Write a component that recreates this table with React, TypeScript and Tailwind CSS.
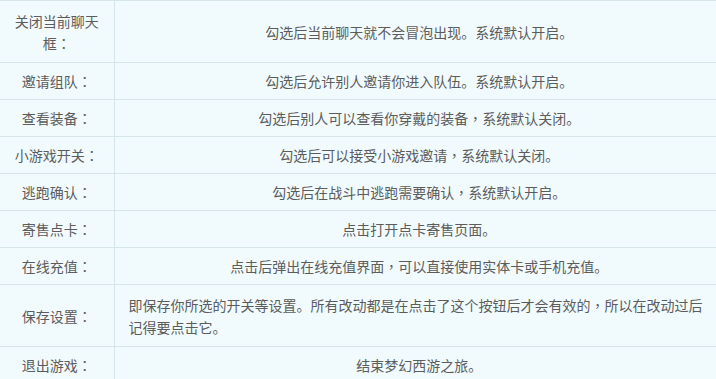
import React from 'react'

// full-width comma/colon sit in the middle of their cell in the original font
const P = ({ c }: { c: string }) => (
  <span style={{ fontFamily: '"Noto Sans CJK TC", sans-serif' }}>{c}</span>
)

function fmt(s: string) {
  return s.split(/([，：])/).map((part, i) =>
    part === '，' || part === '：' ? <P key={i} c={part} /> : <React.Fragment key={i}>{part}</React.Fragment>
  )
}

type Row = { name: string; desc: string; tall?: boolean; left?: boolean }

const rows: Row[] = [
  { name: '关闭当前聊天\n框：', desc: '勾选后当前聊天就不会冒泡出现。系统默认开启。', tall: true },
  { name: '邀请组队：', desc: '勾选后允许别人邀请你进入队伍。系统默认开启。' },
  { name: '查看装备：', desc: '勾选后别人可以查看你穿戴的装备，系统默认关闭。' },
  { name: '小游戏开关：', desc: '勾选后可以接受小游戏邀请，系统默认关闭。' },
  { name: '逃跑确认：', desc: '勾选后在战斗中逃跑需要确认，系统默认开启。' },
  { name: '寄售点卡：', desc: '点击打开点卡寄售页面。' },
  { name: '在线充值：', desc: '点击后弹出在线充值界面，可以直接使用实体卡或手机充值。' },
  {
    name: '保存设置：',
    desc: '即保存你所选的开关等设置。所有改动都是在点击了这个按钮后才会有效的，所以在改动过后\n记得要点击它。',
    tall: true,
    left: true,
  },
  { name: '退出游戏：', desc: '结束梦幻西游之旅。' },
]

function lines(s: string) {
  return s.split('\n').map((l, i) => (
    <React.Fragment key={i}>
      {i > 0 && <br />}
      {fmt(l)}
    </React.Fragment>
  ))
}

export default function App() {
  return (
    <div
      className="w-[716px] h-[379px] overflow-hidden bg-[#f1fbfe] text-[14px] leading-[22px] text-[#5c5c5c]"
      style={{ fontFamily: '"Microsoft YaHei", "Noto Sans CJK SC", sans-serif' }}
    >
      <table className="w-[724px] border-collapse">
        <tbody>
          {rows.map((r, i) => (
            <tr
              key={i}
              className={(r.tall ? 'h-[62px]' : 'h-[37px]') + ' border-t border-[#d6e5ea]'}
            >
              <td className="w-[114px] px-[6px] text-center align-middle border-r border-[#d6e5ea]">
                {lines(r.name)}
              </td>
              <td
                className={
                  r.left
                    ? 'pl-[14px] pr-[4px] text-left align-middle'
                    : 'px-[6px] text-center align-middle'
                }
              >
                {lines(r.desc)}
              </td>
            </tr>
          ))}
        </tbody>
      </table>
    </div>
  )
}
